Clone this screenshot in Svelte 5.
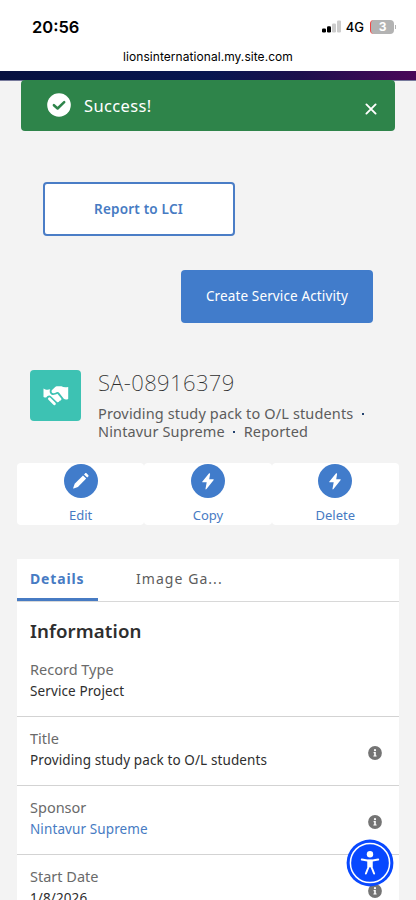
<script lang="ts">
	const actions = [
		{ label: 'Edit', icon: 'pencil' },
		{ label: 'Copy', icon: 'bolt' },
		{ label: 'Delete', icon: 'bolt' }
	];

	const fields = [
		{ label: 'Record Type', value: 'Service Project', info: false, link: false },
		{ label: 'Title', value: 'Providing study pack to O/L students', info: true, link: false },
		{ label: 'Sponsor', value: 'Nintavur Supreme', info: true, link: true },
		{ label: 'Start Date', value: '1/8/2026', info: true, link: false }
	];
</script>

<div class="screen">
	<header class="status">
		<div class="status-row">
			<span class="time">20:56</span>
			<div class="indicators">
				<svg class="signal" width="19" height="13" viewBox="0 0 19 13">
					<rect x="0" y="8.4" width="4" height="4" rx="1.2" fill="#000" />
					<rect x="5" y="6.2" width="4" height="6.2" rx="1.2" fill="#000" />
					<rect x="10" y="3.4" width="4" height="9" rx="1.2" fill="#ccc" />
					<rect x="15" y="0.4" width="4" height="12" rx="1.2" fill="#ccc" />
				</svg>
				<span class="network">4G</span>
				<div class="battery"><span>3</span></div>
			</div>
		</div>
		<div class="url">lionsinternational.my.site.com</div>
	</header>
	<div class="strip"></div>

	<main>
		<div class="toast">
			<svg class="check" width="24" height="24" viewBox="0 0 24 24">
				<circle cx="12" cy="12" r="11.8" fill="#fff" />
				<path d="M6.9 12.2l3.7 3.3 6.6-6.4" fill="none" stroke="#2e844a" stroke-width="2.5" stroke-linecap="round" stroke-linejoin="round" />
			</svg>
			<span class="message">Success!</span>
			<svg class="close" width="12" height="12" viewBox="0 0 12 12">
				<path d="M1.4 1.4l9.2 9.2M10.6 1.4l-9.2 9.2" stroke="#fff" stroke-width="1.9" stroke-linecap="round" />
			</svg>
		</div>

		<div class="buttons">
			<button class="outline">Report to LCI</button>
			<button class="brand">Create Service Activity</button>
		</div>

		<section class="record">
			<div class="record-icon">
				<svg width="26" height="22" viewBox="0 0 26 22" fill="#fff">
					<path d="M9 5l3.5-3.2c.7-.5 1.4-.6 2.500-.6l3.500.1c1.500 1.100 4 1.300 6.700.7v12c-1.600.8-3.200.8-4.400-.2l-4.300-5.600c-1-1.200-2-1.400-3.300-.8L11 8.200C9 8.500 7.800 6.500 9 5z" />
					<path d="M.5 3.4C2.5 5 5 5 7.2 4.3c-.9 1.7-.8 4.2 1.400 5.400 1.900.8 3.900-.1 5.800-.9l3.900 4.800c.5 1.400-.5 2.400-1.700 2.200-.4 1.200-1.400 1.800-2.600 1.200l-5.800-5.600C6.500 10 4.500 10.500 3.200 12.600c-1 0-2-.1-2.700-.6z" />
					<path d="M6.4 13.8l5 4.9" stroke="#fff" stroke-width="2.8" stroke-linecap="round" />
				</svg>
			</div>
			<div class="record-text">
				<h1>SA-08916379</h1>
				<p>Providing study pack to O/L students <i></i><br />Nintavur Supreme <i></i> Reported</p>
			</div>
		</section>

		<nav class="actions">
			{#each actions as action}
				<a class="action" href="#{action.label}">
					<span class="disc">
						{#if action.icon === 'pencil'}
							<svg width="18" height="18" viewBox="0 0 18 18" fill="#fff">
								<path d="M2.7 11.7l8.3-8.3 3.2 3.2-8.3 8.3-4.2 1.5c-.4.1-.6-.1-.5-.5z" />
								<path d="M12 2.4l1-1c.5-.5 1.2-.5 1.7 0l1.5 1.5c.5.5.5 1.2 0 1.700l-1 1z" />
							</svg>
						{:else}
							<svg width="12" height="17" viewBox="0 0 12 17" fill="#fff">
								<path d="M6.9.6L.4 8.4c-.4.4-.2.9.4.9h3.900L3.500 15.700c-.1.8.5 1 1 .4L11.500 7.200c.4-.5.2-.9-.4-.9H7.200L8.100 1c.1-.7-.7-1-1.200-.4z" />
							</svg>
						{/if}
					</span>
					<span>{action.label}</span>
				</a>
			{/each}
		</nav>

		<section class="details">
			<div class="tabs">
				<span class="tab active">Details</span>
				<span class="tab">Image Ga...</span>
			</div>
			<h2>Information</h2>
			{#each fields as field}
				<div class="field">
					<div class="field-text">
						<div class="label">{field.label}</div>
						<div class="value" class:link={field.link}>{field.value}</div>
					</div>
					{#if field.info}
						<svg class="info" width="14" height="14" viewBox="0 0 14 14">
							<circle cx="7" cy="7" r="6.9" fill="#747474" />
							<circle cx="7" cy="4.2" r="1.1" fill="#fff" />
							<path d="M5.6 6.1h2.2v3.3h.8v1.100H5.400V9.400h.8V7.200h-.6z" fill="#fff" />
						</svg>
					{/if}
				</div>
			{/each}
		</section>
	</main>

	<button class="accessibility" aria-label="Accessibility">
		<svg width="48" height="48" viewBox="0 0 48 48">
			<circle cx="24" cy="24" r="23.4" fill="#0848ff" />
			<circle cx="24" cy="24" r="19.6" fill="none" stroke="#fff" stroke-width="1.5" />
			<circle cx="24" cy="15.2" r="3.2" fill="#fff" />
			<path d="M15.8 20.6l5.6.9h5.2l5.6-.9M22.500 22v6l-2.600 6.500M25.500 22v6l2.600 6.500" fill="none" stroke="#fff" stroke-width="2" stroke-linecap="round" stroke-linejoin="round" />
			<path d="M21.5 20.8h5v7.4h-5z" fill="#fff" />
		</svg>
	</button>
</div>

<style>
	:global(body) {
		margin: 0;
		background: #f3f3f3;
	}
	.screen {
		position: relative;
		width: 416px;
		height: 900px;
		overflow: hidden;
		background: #f3f3f3;
		font-family: 'Noto Sans', sans-serif;
		color: #2e2e2e;
	}
	.status {
		height: 71px;
		background: #fff;
		font-family: Inter, sans-serif;
		color: #000;
	}
	.status-row {
		display: flex;
		justify-content: space-between;
		align-items: center;
		height: 20px;
		padding: 17px 22px 0 32px;
	}
	.time {
		font-size: 16.5px;
		font-weight: 600;
	}
	.indicators {
		display: flex;
		align-items: center;
	}
	.signal {
		margin-top: -2px;
	}
	.network {
		margin: 0 6px 0 5px;
		font-size: 13px;
		font-weight: 500;
	}
	.battery {
		position: relative;
		box-sizing: border-box;
		width: 24px;
		height: 14px;
		border-left: 1px solid #f04545;
		border-radius: 4px;
		background: #b3b3b3;
		color: #fff;
		font-size: 12px;
		font-weight: 700;
		line-height: 14px;
		text-align: center;
	}
	.battery::after {
		content: '';
		position: absolute;
		top: 5px;
		right: -2px;
		width: 1px;
		height: 4px;
		background: #b3b3b3;
	}
	.url {
		padding-top: 11px;
		font-size: 12px;
		letter-spacing: 0.06px;
		line-height: 18px;
		text-align: center;
	}
	.strip {
		height: 9px;
		border-bottom: 1px solid #777a9c;
		background: linear-gradient(90deg, #07113f, #071650 50%, #1c104c 72%, #4a0759);
	}
	main {
		margin-top: -1px;
		padding: 0 17px;
	}
	.toast {
		position: relative;
		display: flex;
		align-items: center;
		box-sizing: border-box;
		height: 51px;
		margin: 0 4px;
		padding: 0 18px 1px 26px;
		border-radius: 4px;
		background: #2e844a;
		color: #fff;
	}
	.message {
		flex: 1;
		margin-left: 13px;
		font-size: 16.5px;
		letter-spacing: 0.35px;
	}
	.close {
		margin-top: 8px;
	}
	.buttons {
		display: flex;
		flex-direction: column;
		gap: 34px;
		padding: 51px 26px 0;
	}
	button {
		font-family: inherit;
	}
	.outline,
	.brand {
		box-sizing: border-box;
		width: 192px;
		padding: 0 0 1px;
		border-radius: 4px;
		font-size: 13.5px;
		letter-spacing: 0.13px;
	}
	.outline {
		height: 54px;
		padding-right: 1px;
		border: 2px solid #4a7dc6;
		background: #fff;
		color: #477bc3;
		font-weight: 600;
		letter-spacing: 0.2px;
	}
	.brand {
		align-self: flex-end;
		height: 53px;
		border: none;
		background: #417ccb;
		color: #fff;
	}
	.record {
		display: flex;
		height: 93px;
		padding: 47px 0 0 13px;
	}
	.record-icon {
		display: flex;
		align-items: center;
		justify-content: center;
		width: 51px;
		height: 51px;
		margin-right: 17px;
		border-radius: 4px;
		background: #3dc2b3;
	}
	h1 {
		margin: -1px 0 0;
		font-size: 22px;
		font-weight: 200;
		letter-spacing: 0.4px;
		line-height: 26px;
	}
	p {
		margin: 9px 0 0;
		color: #5c5c5c;
		font-size: 14.5px;
		letter-spacing: 0.14px;
		line-height: 18px;
		white-space: nowrap;
	}
	p i {
		display: inline-block;
		width: 2px;
		height: 2px;
		margin: 0 4.5px;
		vertical-align: 4px;
		background: #24436f;
	}
	.actions {
		display: flex;
		height: 62px;
	}
	.action {
		display: flex;
		flex: 1;
		flex-direction: column;
		align-items: center;
		padding-top: 1px;
		box-sizing: border-box;
		border-radius: 4px;
		background: #fff;
		color: #477bc3;
		font-size: 13px;
		line-height: 18px;
		text-decoration: none;
	}
	.disc {
		display: flex;
		align-items: center;
		justify-content: center;
		width: 34px;
		height: 34px;
		margin-bottom: 8px;
		border-radius: 50%;
		background: #417ccb;
	}
	.details {
		margin-top: 34px;
		background: #fff;
	}
	.tabs {
		display: flex;
		box-sizing: border-box;
		height: 43px;
		border-bottom: 1px solid #d8d8d8;
		font-size: 14px;
		letter-spacing: 1.05px;
		line-height: 40px;
	}
	.tab {
		box-sizing: border-box;
		height: 42px;
		margin-right: 25px;
		padding: 0 13px;
		color: #5c5c5c;
	}
	.tab.active {
		width: 81px;
		border-bottom: 3px solid #477bc3;
		color: #477bc3;
		font-weight: 700;
		letter-spacing: 0.85px;
	}
	h2 {
		margin: 0;
		padding: 16px 13px 0;
		font-size: 18.7px;
		font-weight: 600;
		letter-spacing: 0.08px;
		line-height: 26px;
	}
	.field {
		display: flex;
		align-items: flex-start;
		justify-content: space-between;
		box-sizing: border-box;
		height: 69px;
		padding: 11px 17px 0 13px;
		border-bottom: 1px solid #d3d3d3;
	}
	h2 + .field {
		height: 73px;
		padding-top: 15px;
	}
	.info {
		margin-top: 18px;
	}
	.label {
		color: #6a6a6a;
		font-size: 14.5px;
		line-height: 21px;
	}
	.value {
		font-size: 13.5px;
		letter-spacing: 0.11px;
		line-height: 23px;
	}
	.link {
		color: #477bc3;
	}
	.accessibility {
		position: absolute;
		top: 839px;
		left: 346px;
		width: 48px;
		height: 48px;
		padding: 0;
		border: none;
		background: none;
	}
	.accessibility svg {
		display: block;
	}
</style>
